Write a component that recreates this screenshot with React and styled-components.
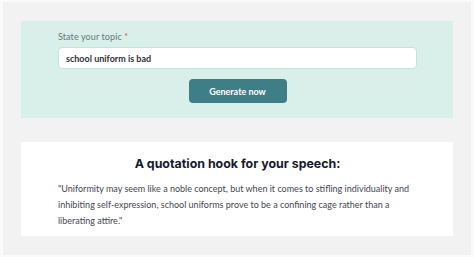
import React from 'react'
import styled, { createGlobalStyle } from 'styled-components'

const GlobalStyle = createGlobalStyle`
  body {
    margin: 0;
    background: #fafafa;
    font-family: 'Lato', 'Liberation Sans', sans-serif;
  }
`

const App = () => {
  return (
    <>
      <GlobalStyle />
      <Page>
        <FormPanel>
          <Label>
            State your topic <Required>*</Required>
          </Label>
          <TopicInput defaultValue="school uniform is bad" />
          <GenerateButton type="button">Generate now</GenerateButton>
        </FormPanel>
        <ResultPanel>
          <Heading>A quotation hook for your speech:</Heading>
          <Quote>
            "Uniformity may seem like a noble concept, but when it comes to
            stifling individuality and inhibiting self-expression, school
            uniforms prove to be a confining cage rather than a liberating
            attire."
          </Quote>
        </ResultPanel>
      </Page>
    </>
  )
}

export default App

const Page = styled.div`
  display: flex;
  flex-direction: column;
  gap: 24px;
  margin: 2px 3px;
  padding: 19px 18px 19px;
  background: #f2f2f2;
`

const FormPanel = styled.div`
  display: flex;
  flex-direction: column;
  align-items: stretch;
  padding: 10px 36px 15px 37px;
  background: #d9efea;
`

const Label = styled.label`
  font-size: 9px;
  line-height: 12px;
  letter-spacing: 0.1px;
  color: #66777c;
`

const Required = styled.span`
  color: #e0525a;
`

const TopicInput = styled.input`
  box-sizing: border-box;
  height: 22px;
  margin-top: 4px;
  padding: 0 7px;
  border: 1px solid #c6e2dd;
  border-radius: 4px;
  background: #fff;
  font-family: 'Lato', 'Liberation Sans', sans-serif;
  font-size: 9px;
  font-weight: 700;
  color: #30303a;
  outline: none;
`

const GenerateButton = styled.button`
  align-self: center;
  width: 98px;
  height: 24px;
  margin-top: 10px;
  border: none;
  border-radius: 4px;
  background: #3e7f87;
  color: #fff;
  font-family: 'Lato', 'Liberation Sans', sans-serif;
  font-size: 9px;
  font-weight: 700;
`

const ResultPanel = styled.div`
  display: flex;
  flex-direction: column;
  gap: 7px;
  padding: 12px 36px 7px 37px;
  background: #fff;
`

const Heading = styled.h2`
  margin: 0;
  font-family: 'Inter', 'Liberation Sans', sans-serif;
  font-size: 12.4px;
  line-height: 20px;
  font-weight: 700;
  text-align: center;
  color: #161a2d;
`

const Quote = styled.p`
  margin: 0;
  font-size: 9px;
  line-height: 16px;
  color: #45474f;
`
